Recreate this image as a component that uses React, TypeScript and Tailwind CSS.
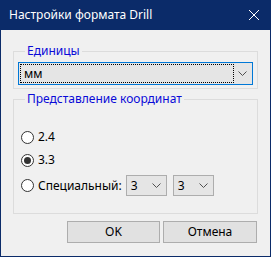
import React, { useState } from "react";

const font = { fontFamily: '"Noto Sans", "Open Sans", sans-serif' };

const Chevron = () => (
  <svg width="9" height="5" viewBox="0 0 9 5" className="block">
    <path d="M0.5 0.5 L4.5 4.5 L8.5 0.5" fill="none" stroke="#505050" strokeWidth="1" />
  </svg>
);

const Radio: React.FC<{ checked: boolean; label: string; onClick: () => void }> = ({ checked, label, onClick }) => (
  <button onClick={onClick} className="flex items-center gap-[4px] text-[12px] text-black">
    <span className="flex h-[13px] w-[13px] items-center justify-center rounded-full border border-[#333333] bg-white">
      {checked && <span className="h-[7px] w-[7px] rounded-full bg-[#333333]" />}
    </span>
    <span className="leading-[16px]">{label}</span>
  </button>
);

const SmallCombo: React.FC<{ value: string }> = ({ value }) => (
  <div className="flex h-[21px] w-[41px] items-center justify-between border border-[#adadad] bg-[#e5e5e5] pl-[4px] pr-[5px] text-[12px] text-black">
    <span className="leading-[16px]">{value}</span>
    <Chevron />
  </div>
);

export default function App() {
  const [mode, setMode] = useState("3.3");

  return (
    <div style={font} className="flex h-[257px] w-[271px] flex-col bg-[#0b2b69]">
      <div className="flex h-[30px] shrink-0 items-center justify-between pl-[9px] pr-[12px] text-white">
        <span className="text-[12px] leading-[16px]">Настройки формата Drill</span>
        <svg width="10" height="10" viewBox="0 0 10 10">
          <path d="M0 0 L10 10 M10 0 L0 10" stroke="#ffffff" strokeWidth="1" />
        </svg>
      </div>

      <div className="mx-[1px] mb-[1px] flex flex-1 flex-col bg-[#f0f0f0] px-[12px]">
        <fieldset className="mt-[13px] border border-[#dcdcdc] px-0 pb-[3px]">
          <legend className="ml-[11px] px-[2px] text-[12px] leading-[16px] text-[#0a0ad8]">Единицы</legend>
          <div className="mx-[4px] mt-[3px] flex h-[23px] items-center border border-[#0078d7] bg-[#e5e5e5] p-[1px]">
            <div className="flex h-full flex-1 items-center border border-dotted border-black pl-[3px] text-[12px] leading-[16px] text-black">
              мм
            </div>
            <div className="flex w-[17px] items-center justify-center">
              <Chevron />
            </div>
          </div>
        </fieldset>

        <fieldset className="mt-[2px] h-[123px] border border-[#dcdcdc] px-0">
          <legend className="ml-[11px] px-[2px] text-[12px] leading-[16px] text-[#0a0ad8]">
            Представление координат
          </legend>
          <div className="ml-[7px] mt-[22px] flex flex-col gap-[7px]">
            <Radio checked={mode === "2.4"} label="2.4" onClick={() => setMode("2.4")} />
            <Radio checked={mode === "3.3"} label="3.3" onClick={() => setMode("3.3")} />
            <div className="flex items-center">
              <Radio checked={mode === "custom"} label="Специальный:" onClick={() => setMode("custom")} />
              <div className="ml-[4px] flex gap-[6px]">
                <SmallCombo value="3" />
                <SmallCombo value="3" />
              </div>
            </div>
          </div>
        </fieldset>

        <div className="mt-[7px] flex justify-end gap-[3px] pr-[1px]">
          <button className="h-[22px] w-[93px] border border-[#adadad] bg-[#e1e1e1] text-[12px] text-black">OK</button>
          <button className="h-[22px] w-[94px] border border-[#adadad] bg-[#e1e1e1] text-[12px] text-black">Отмена</button>
        </div>
      </div>
    </div>
  );
}
